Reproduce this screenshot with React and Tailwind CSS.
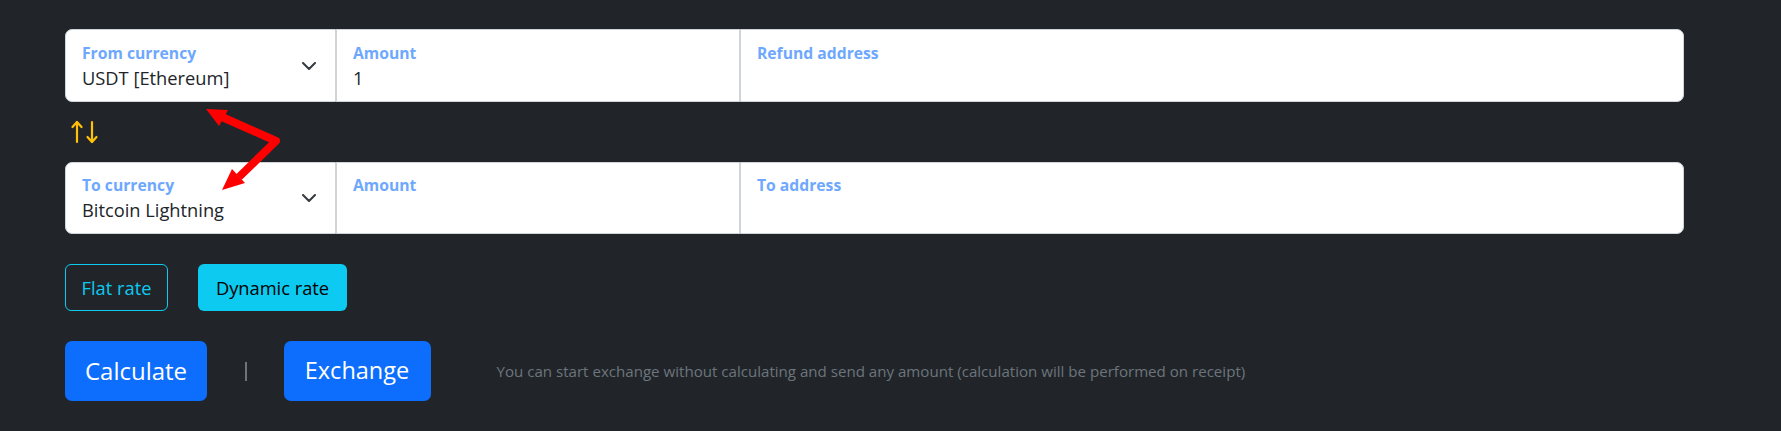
import React from "react";

function Chevron() {
  return (
    <svg width="14" height="8" viewBox="0 0 14 8" className="shrink-0">
      <polyline points="1,1 7,7 13,1" fill="none" stroke="#343a40" strokeWidth="2" strokeLinecap="round" strokeLinejoin="round" />
    </svg>
  );
}

function SwapArrows() {
  return (
    <svg width="30" height="24" viewBox="0 0 30 24" className="shrink-0">
      <g fill="none" stroke="#ffc107" strokeWidth="2.2" strokeLinecap="round" strokeLinejoin="round">
        <line x1="6" y1="2" x2="6" y2="22" />
        <polyline points="1.5,7 6,2 10.5,7" />
        <line x1="21" y1="2" x2="21" y2="22" />
        <polyline points="16.5,17 21,22 25.5,17" />
      </g>
    </svg>
  );
}

function Field({ label, value, className, select }) {
  return (
    <div className={"bg-white border border-[#ced4da] flex items-center pl-4 pr-[19px] " + className}>
      <div className="flex-1 flex flex-col pt-[1px]">
        <div className="text-[15.7px] leading-[20px] font-bold text-[#6ea8fe]">{label}</div>
        <div className="text-[18.3px] leading-[24px] mt-[3px] text-[#212529] h-[24px]">{value}</div>
      </div>
      {select && <Chevron />}
    </div>
  );
}

export default function App() {
  return (
    <div className="relative w-full h-[431px] bg-[#212529] pl-[65px] pt-[29px] font-['Open_Sans',sans-serif] overflow-hidden">
      <div className="w-[1619px] flex flex-col">
        <div className="flex h-[73px]">
          <Field label="From currency" value="USDT [Ethereum]" className="w-[271px] rounded-l-[7px]" select />
          <Field label="Amount" value="1" className="w-[404px]" />
          <Field label="Refund address" value="" className="flex-1 rounded-r-[7px]" />
        </div>
        <div className="h-[60px] flex items-center pl-[6px]">
          <SwapArrows />
        </div>
        <div className="flex h-[72px]">
          <Field label="To currency" value="Bitcoin Lightning" className="w-[271px] rounded-l-[7px]" select />
          <Field label="Amount" value="" className="w-[404px]" />
          <Field label="To address" value="" className="flex-1 rounded-r-[7px]" />
        </div>
        <div className="flex gap-[30px] mt-[30px]">
          <div className="w-[103px] h-[47px] border border-[#0dcaf0] rounded-[6px] flex items-center justify-center text-[#0dcaf0] text-[18.3px]">Flat rate</div>
          <div className="w-[149px] h-[47px] bg-[#0dcaf0] rounded-[6px] flex items-center justify-center text-black text-[18.3px]">Dynamic rate</div>
        </div>
        <div className="flex items-center mt-[30px] h-[60px]">
          <div className="w-[142px] h-[60px] bg-[#0d6efd] rounded-[7px] flex items-center justify-center text-white text-[24px]">Calculate</div>
          <div className="w-[1.5px] h-[19px] bg-[#6c757d] ml-[38px] mr-[37px]"></div>
          <div className="w-[147px] h-[60px] bg-[#0d6efd] rounded-[7px] flex items-center justify-center text-white text-[23.5px]">Exchange</div>
          <div className="ml-[66px] text-[15.1px] text-[#6c757d]">You can start exchange without calculating and send any amount (calculation will be performed on receipt)</div>
        </div>
      </div>
      <svg className="absolute top-0 left-0 pointer-events-none" width="1781" height="431" viewBox="0 0 1781 431">
        <polyline points="222,117 276,141 239,177" fill="none" stroke="#ff0000" strokeWidth="8" strokeLinejoin="round" />
        <polygon points="206,109 228,110 219,126" fill="#ff0000" />
        <polygon points="222,190 232,169 245,183" fill="#ff0000" />
      </svg>
    </div>
  );
}
